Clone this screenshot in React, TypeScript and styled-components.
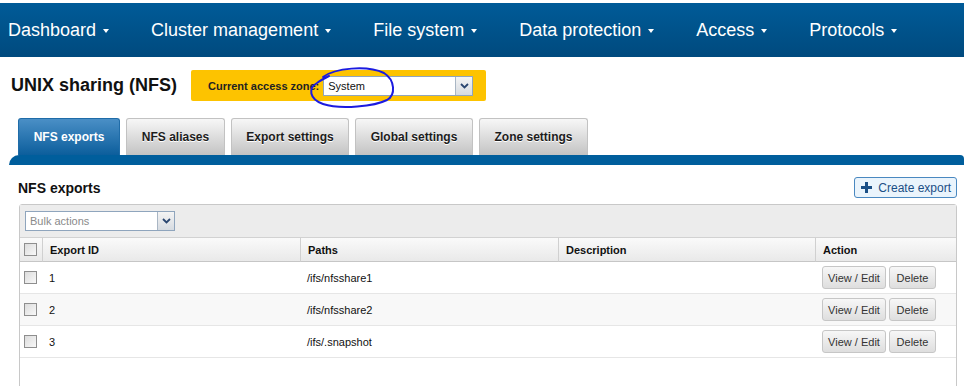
import React from 'react';
import styled, { createGlobalStyle } from 'styled-components';

const GlobalStyle = createGlobalStyle`
  body {
    margin: 0;
    background: #ffffff;
    font-family: "Liberation Sans", Arial, sans-serif;
    overflow: hidden;
  }
`;

const Page = styled.div`
  width: 964px;
  height: 386px;
  overflow: hidden;
  padding-top: 3px;
  box-sizing: border-box;
`;

const NavBar = styled.nav`
  height: 54px;
  display: flex;
  align-items: center;
  gap: 42px;
  padding-left: 8px;
  background: linear-gradient(#005b98, #004a7e);
`;

const NavItem = styled.div`
  display: flex;
  align-items: center;
  color: #ffffff;
  font-size: 18px;
  white-space: nowrap;
`;

const Caret = styled.span`
  width: 0;
  height: 0;
  margin-left: 7px;
  margin-top: 2px;
  border-left: 3px solid transparent;
  border-right: 3px solid transparent;
  border-top: 4px solid #ffffff;
`;

const HeaderRow = styled.div`
  display: flex;
  align-items: center;
  margin-top: 13px;
  padding-left: 11px;
`;

const Title = styled.h1`
  margin: 0;
  font-size: 18px;
  font-weight: bold;
  color: #111111;
`;

const ZoneBox = styled.div`
  position: relative;
  margin-left: 14px;
  width: 295px;
  height: 31px;
  box-sizing: border-box;
  padding-left: 17px;
  display: flex;
  align-items: center;
  gap: 4px;
  background: #fdc300;
  border-radius: 2px;
`;

const ZoneLabel = styled.span`
  font-size: 11px;
  font-weight: bold;
  color: #222222;
`;

const SelectBox = styled.div<{ $width: number }>`
  width: ${(p) => p.$width}px;
  height: 20px;
  box-sizing: border-box;
  display: flex;
  background: #ffffff;
  border: 1px solid #8fa5bd;
`;

const SelectText = styled.span<{ $muted?: boolean }>`
  flex: 1;
  padding-left: 4px;
  font-size: 11px;
  line-height: 18px;
  color: ${(p) => (p.$muted ? '#8a8a8a' : '#111111')};
`;

const SelectArrow = styled.span`
  width: 16px;
  display: flex;
  align-items: center;
  justify-content: center;
  border-left: 1px solid #a9b6c4;
  background: linear-gradient(#f4f4f4, #d6dbe1);
`;

const Scribble = styled.svg`
  position: absolute;
  left: 110px;
  top: -8px;
  width: 100px;
  height: 50px;
  pointer-events: none;
`;

const TabRow = styled.div`
  display: flex;
  gap: 6px;
  margin-top: 17px;
  padding-left: 18px;
`;

const Tab = styled.div<{ $active?: boolean; $width: number }>`
  width: ${(p) => p.$width}px;
  height: 37px;
  box-sizing: border-box;
  display: flex;
  align-items: center;
  justify-content: center;
  white-space: nowrap;
  font-size: 12px;
  font-weight: bold;
  border-radius: 3px 3px 0 0;
  border: 1px solid ${(p) => (p.$active ? '#1f6ca8' : '#c2c2c2')};
  border-bottom: none;
  color: ${(p) => (p.$active ? '#ffffff' : '#1c1c1c')};
  background: ${(p) =>
    p.$active
      ? 'linear-gradient(#4a8fc6, #0c5e9c)'
      : 'linear-gradient(#f7f7f7, #c3c3c3)'};
  text-shadow: ${(p) => (p.$active ? 'none' : '0 1px 0 #ffffff')};
`;

const Band = styled.div`
  height: 10px;
  margin-left: 9px;
  background: #005e9c;
  border-radius: 10px 4px 0 0;
`;

const Section = styled.section`
  padding: 12px 7px 0 19px;
`;

const SectionHead = styled.div`
  display: flex;
  align-items: center;
  justify-content: space-between;
  height: 21px;
  margin-bottom: 6px;
`;

const SectionTitle = styled.h2`
  margin: 0 0 0 -1px;
  font-size: 14px;
  font-weight: bold;
  color: #111111;
`;

const CreateButton = styled.button`
  height: 21px;
  padding: 0 5px 0 6px;
  display: flex;
  align-items: center;
  gap: 6px;
  white-space: nowrap;
  font-family: inherit;
  font-size: 12px;
  color: #1a4f86;
  background: #eaf4fc;
  border: 1px solid #4a88c0;
  border-radius: 3px;
`;

const Panel = styled.div`
  border: 1px solid #c8c8c8;
  border-radius: 3px 3px 0 0;
  height: 200px;
`;

const Toolbar = styled.div`
  height: 32px;
  padding: 6px 5px;
  box-sizing: border-box;
  background: #ececec;
`;

const Grid = styled.div`
  display: grid;
  grid-template-columns: 22px 258px 258px 257px 1fr;
`;

const HeadCell = styled.div<{ $first?: boolean }>`
  height: 23px;
  display: flex;
  align-items: center;
  padding-left: ${(p) => (p.$first ? '4px' : '7px')};
  font-size: 11px;
  font-weight: bold;
  color: #111111;
  background: linear-gradient(#fafafa, #e9e9e9);
  border-top: 1px solid #d2d2d2;
  border-bottom: 1px solid #c6c6c6;
  border-left: ${(p) => (p.$first ? 'none' : '1px solid #d0d0d0')};
`;

const Cell = styled.div<{ $alt?: boolean; $first?: boolean }>`
  height: 31px;
  display: flex;
  align-items: center;
  gap: 3px;
  padding-left: ${(p) => (p.$first ? '4px' : '7px')};
  font-size: 11px;
  color: #111111;
  background: ${(p) => (p.$alt ? '#f8f8f8' : '#ffffff')};
  border-bottom: 1px solid #e6e6e6;
`;

const Check = styled.span`
  width: 13px;
  height: 13px;
  box-sizing: border-box;
  border: 1px solid #8e8e8e;
  background: linear-gradient(135deg, #dcdcdc, #f8f8f8);
`;

const RowButton = styled.button<{ $width: number }>`
  width: ${(p) => p.$width}px;
  height: 23px;
  padding: 0;
  font-family: inherit;
  font-size: 11px;
  color: #333333;
  background: linear-gradient(#f7f7f7, #dedede);
  border: 1px solid #c6c6c6;
  border-radius: 3px;
`;

const Chevron = () => (
  <svg width="9" height="6" viewBox="0 0 9 6">
    <path d="M1 1 L4.5 4.5 L8 1" fill="none" stroke="#2a4670" strokeWidth="1.8" />
  </svg>
);

const navItems = [
  'Dashboard',
  'Cluster management',
  'File system',
  'Data protection',
  'Access',
  'Protocols',
];

const tabs = [
  { label: 'NFS exports', width: 102 },
  { label: 'NFS aliases', width: 99 },
  { label: 'Export settings', width: 118 },
  { label: 'Global settings', width: 118 },
  { label: 'Zone settings', width: 109 },
];

const exportsData = [
  { id: '1', path: '/ifs/nfsshare1' },
  { id: '2', path: '/ifs/nfsshare2' },
  { id: '3', path: '/ifs/.snapshot' },
];

const App: React.FC = () => {
  return (
    <Page>
      <GlobalStyle />
      <NavBar>
        {navItems.map((item) => (
          <NavItem key={item}>
            {item}
            <Caret />
          </NavItem>
        ))}
      </NavBar>

      <HeaderRow>
        <Title>UNIX sharing (NFS)</Title>
        <ZoneBox>
          <ZoneLabel>Current access zone:</ZoneLabel>
          <SelectBox $width={150}>
            <SelectText>System</SelectText>
            <SelectArrow>
              <Chevron />
            </SelectArrow>
          </SelectBox>
          <Scribble viewBox="300 62 100 50">
            <path
              d="M322 77 C334 68 366 65 383 73 C394 80 395 95 386 100 C374 106 340 110 322 104 C308 99 307 88 316 83 C320 80 324 78 328 76"
              fill="none"
              stroke="#1b1be0"
              strokeWidth="2"
              strokeLinecap="round"
            />
          </Scribble>
        </ZoneBox>
      </HeaderRow>

      <TabRow>
        {tabs.map((t, i) => (
          <Tab key={t.label} $active={i === 0} $width={t.width}>
            {t.label}
          </Tab>
        ))}
      </TabRow>
      <Band />

      <Section>
        <SectionHead>
          <SectionTitle>NFS exports</SectionTitle>
          <CreateButton>
            <svg width="11" height="11" viewBox="0 0 11 11">
              <path d="M5.5 0 V11 M0 5.5 H11" stroke="#1a4f86" strokeWidth="3" />
            </svg>
            Create export
          </CreateButton>
        </SectionHead>

        <Panel>
          <Toolbar>
            <SelectBox $width={150}>
              <SelectText $muted>Bulk actions</SelectText>
              <SelectArrow>
                <Chevron />
              </SelectArrow>
            </SelectBox>
          </Toolbar>
          <Grid>
            <HeadCell $first>
              <Check />
            </HeadCell>
            <HeadCell>Export ID</HeadCell>
            <HeadCell>Paths</HeadCell>
            <HeadCell>Description</HeadCell>
            <HeadCell>Action</HeadCell>
            {exportsData.map((row, i) => (
              <React.Fragment key={row.id}>
                <Cell $first $alt={i === 1}>
                  <Check />
                </Cell>
                <Cell $alt={i === 1}>{row.id}</Cell>
                <Cell $alt={i === 1}>{row.path}</Cell>
                <Cell $alt={i === 1} />
                <Cell $alt={i === 1}>
                  <RowButton $width={64}>View / Edit</RowButton>
                  <RowButton $width={47}>Delete</RowButton>
                </Cell>
              </React.Fragment>
            ))}
          </Grid>
        </Panel>
      </Section>
    </Page>
  );
};

export default App;
